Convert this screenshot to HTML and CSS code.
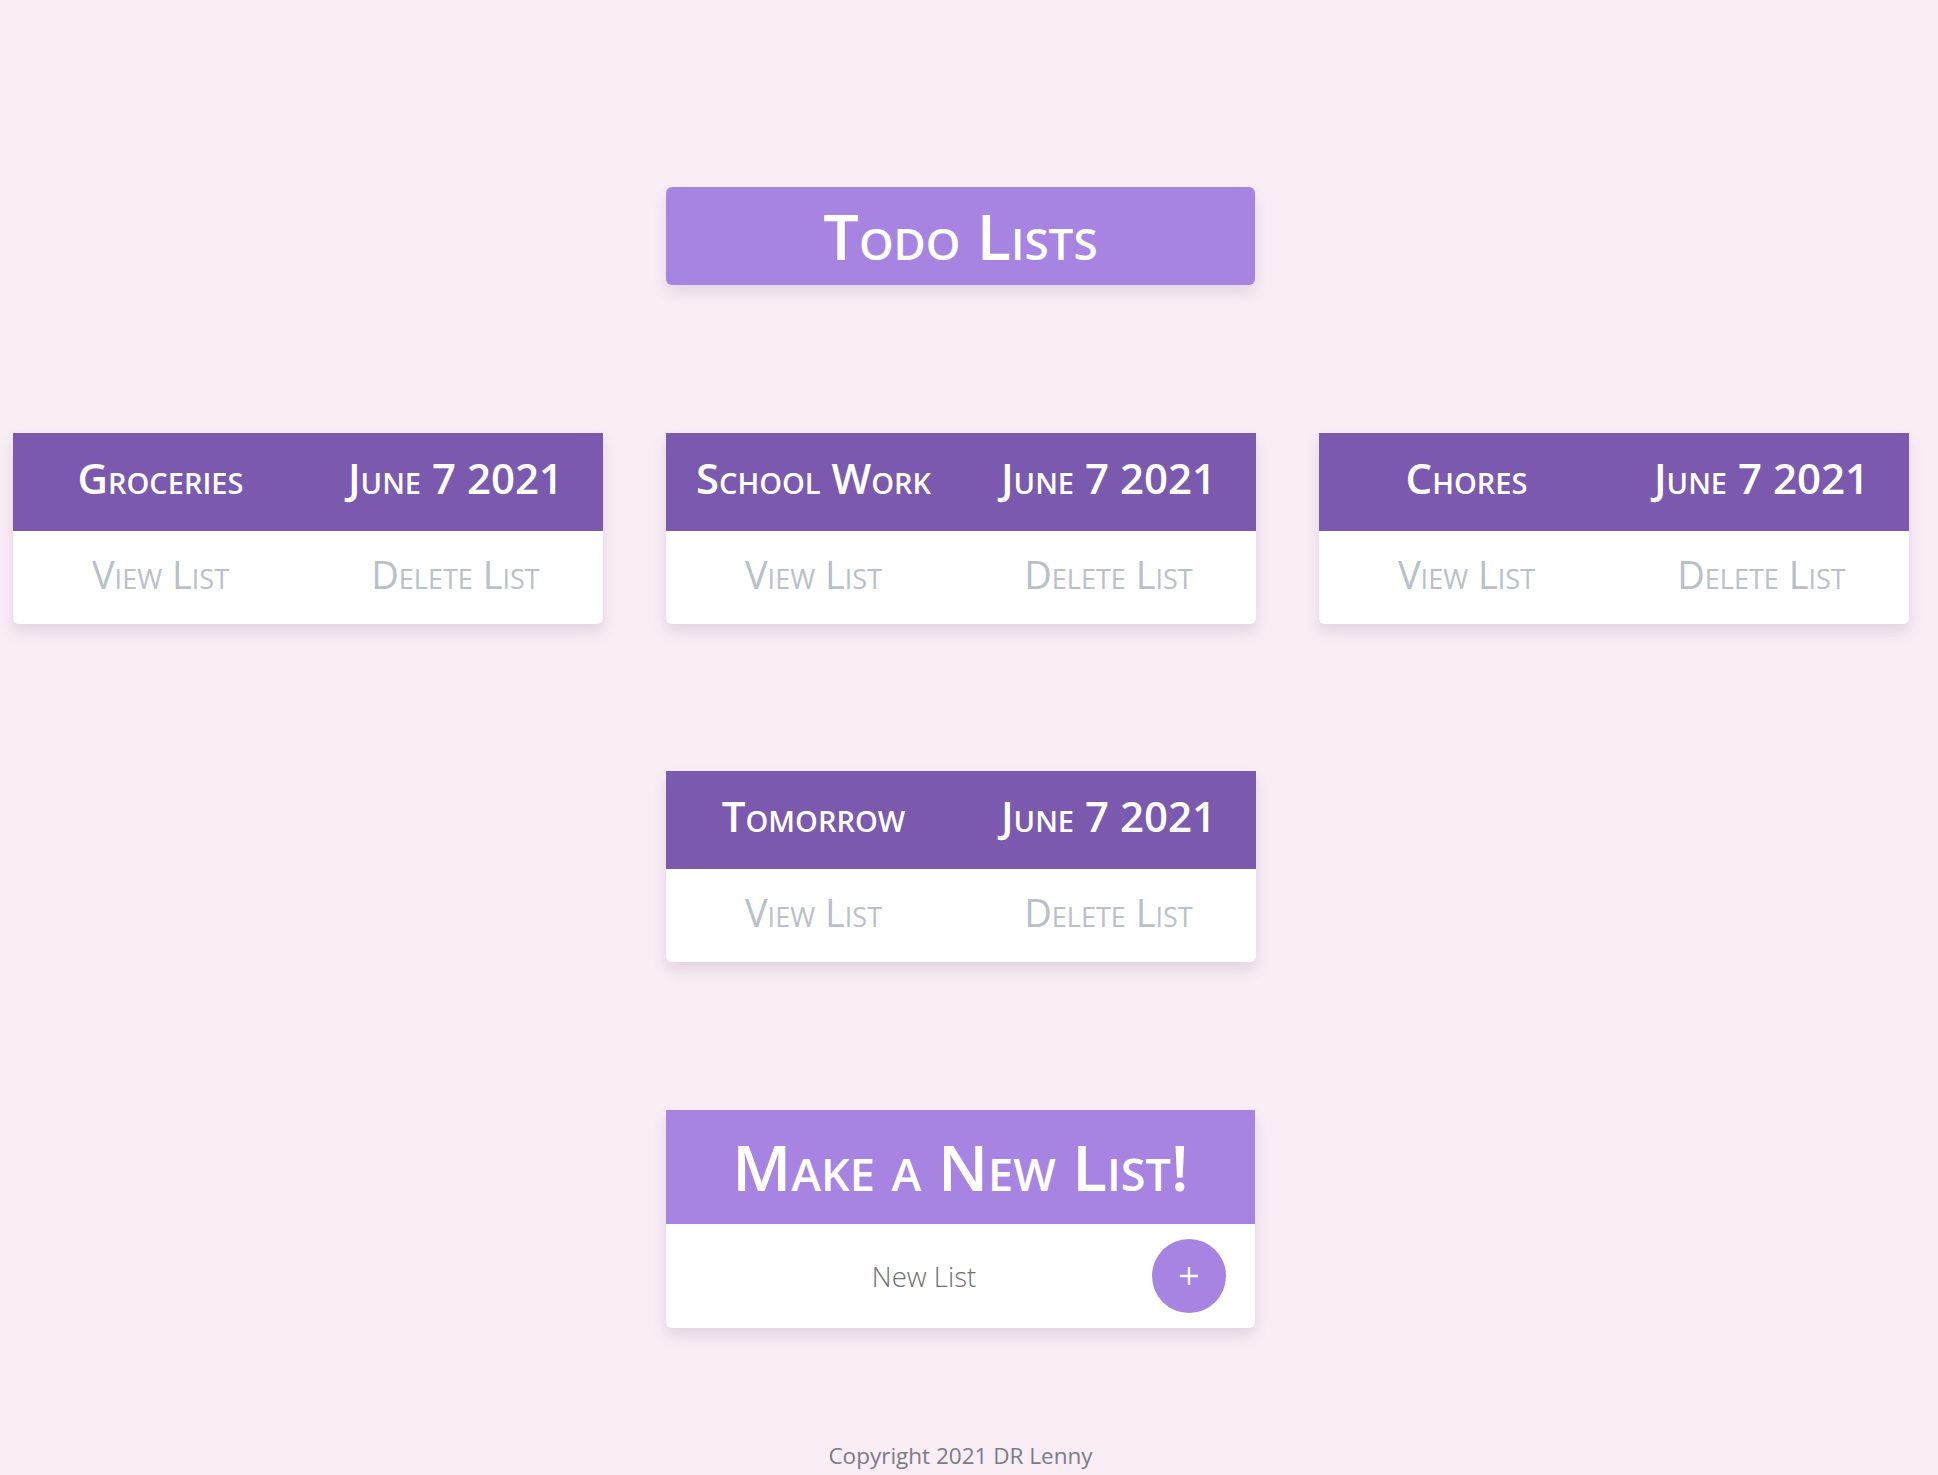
FILE: index.html
```html
<!DOCTYPE html>
<html lang="en">
<head>
<meta charset="utf-8">
<title>Todo Lists</title>
<link rel="stylesheet" href="styles.css">
</head>
<body>
<main class="page">
  <h1 class="page-title">Todo Lists</h1>

  <section class="lists">
    <article class="list-card">
      <header class="list-head">
        <span class="list-name">Groceries</span>
        <span class="list-date">June 7 2021</span>
      </header>
      <div class="list-actions">
        <a class="list-link" href="#">View List</a>
        <a class="list-link" href="#">Delete List</a>
      </div>
    </article>
    <article class="list-card">
      <header class="list-head">
        <span class="list-name">School Work</span>
        <span class="list-date">June 7 2021</span>
      </header>
      <div class="list-actions">
        <a class="list-link" href="#">View List</a>
        <a class="list-link" href="#">Delete List</a>
      </div>
    </article>
    <article class="list-card">
      <header class="list-head">
        <span class="list-name">Chores</span>
        <span class="list-date">June 7 2021</span>
      </header>
      <div class="list-actions">
        <a class="list-link" href="#">View List</a>
        <a class="list-link" href="#">Delete List</a>
      </div>
    </article>
    <article class="list-card">
      <header class="list-head">
        <span class="list-name">Tomorrow</span>
        <span class="list-date">June 7 2021</span>
      </header>
      <div class="list-actions">
        <a class="list-link" href="#">View List</a>
        <a class="list-link" href="#">Delete List</a>
      </div>
    </article>
  </section>

  <section class="new-card">
    <h2 class="new-head">Make a New List!</h2>
    <form class="new-form">
      <input class="new-input" type="text" placeholder="New List">
      <button class="add-btn" type="button" aria-label="Add list">
        <svg width="22" height="22" viewBox="0 0 22 22"><path d="M11 2v18M2 11h18" stroke="#fff" stroke-width="2.4" fill="none"/></svg>
      </button>
    </form>
  </section>

  <footer class="footer">Copyright 2021 DR Lenny</footer>
</main>
</body>
</html>
```

FILE: styles.css
```css
html, body {
  margin: 0;
  padding: 0;
  background: #f9edf6;
}

body {
  font-family: "Open Sans", "Noto Sans", sans-serif;
}

.page {
  width: 1921px;
  padding-top: 187px;
  display: flex;
  flex-direction: column;
  align-items: center;
}

.page-title {
  margin: 0;
  width: 589px;
  height: 98px;
  box-sizing: border-box;
  background: #a784e1;
  color: #fff;
  border-radius: 6px;
  font-size: 63px;
  font-weight: 600;
  font-variant: small-caps;
  text-align: center;
  line-height: 98px;
  box-shadow: 0 8px 14px rgba(120, 80, 120, 0.14);
}

.lists {
  margin-top: 148px;
  width: 1896px;
  display: flex;
  flex-wrap: wrap;
  justify-content: center;
  column-gap: 63px;
  row-gap: 147px;
  padding-left: 1px;
}

.list-card {
  width: 590px;
  background: #fff;
  border-radius: 0 0 6px 6px;
  box-shadow: 0 8px 14px rgba(120, 80, 120, 0.16);
  overflow: hidden;
}

.list-head {
  height: 98px;
  box-sizing: border-box;
  padding-bottom: 9px;
  background: #7a59ae;
  color: #fff;
  display: flex;
  align-items: center;
  font-size: 42px;
  font-weight: 600;
  font-variant: small-caps;
}

.list-name,
.list-date {
  flex: 1;
  text-align: center;
  white-space: nowrap;
}

.list-actions {
  height: 93px;
  box-sizing: border-box;
  padding-bottom: 7px;
  display: flex;
  align-items: center;
}

.list-link {
  flex: 1;
  text-align: center;
  color: #b9c0ca;
  text-decoration: none;
  font-size: 38px;
  font-variant: small-caps;
}

.new-card {
  margin-top: 148px;
  width: 589px;
  background: #fff;
  border-radius: 0 0 6px 6px;
  box-shadow: 0 8px 14px rgba(120, 80, 120, 0.16);
  overflow: hidden;
}

.new-head {
  margin: 0;
  height: 114px;
  background: #a784e1;
  color: #fff;
  font-size: 64px;
  font-weight: 600;
  font-variant: small-caps;
  text-align: center;
  line-height: 114px;
}

.new-form {
  height: 104px;
  margin: 0;
  display: flex;
  align-items: center;
  padding-right: 29px;
}

.new-input {
  flex: 1;
  min-width: 0;
  border: none;
  outline: none;
  background: transparent;
  padding: 0 0 0 30px;
  font-family: "Open Sans", "Noto Sans", sans-serif;
  font-size: 27.5px;
  font-weight: 300;
  text-align: center;
  color: #555;
}

.new-input::placeholder {
  color: #6f6f74;
}

.add-btn {
  width: 74px;
  height: 74px;
  border-radius: 50%;
  border: none;
  background: #a784e1;
  display: flex;
  align-items: center;
  justify-content: center;
  padding: 0;
  cursor: pointer;
}

.footer {
  margin-top: 112px;
  margin-bottom: 8px;
  font-size: 22.5px;
  color: #7b7c86;
  font-family: "Open Sans", "Noto Sans", sans-serif;
}
```
